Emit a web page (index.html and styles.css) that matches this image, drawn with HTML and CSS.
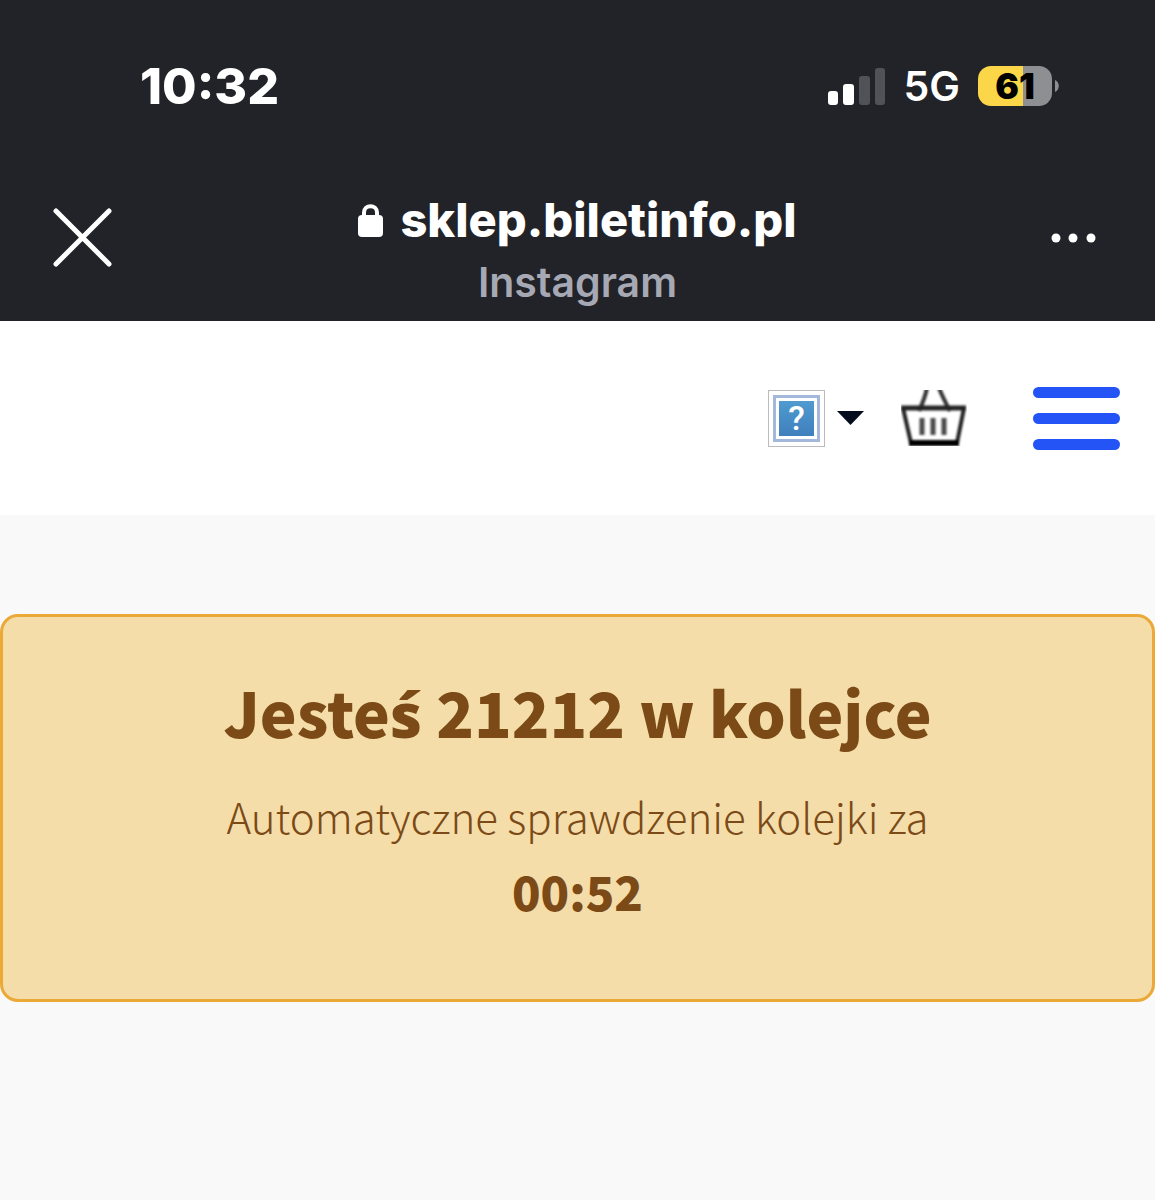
FILE: index.html
```html
<!DOCTYPE html>
<html lang="pl">
<head>
  <meta charset="UTF-8" />
  <meta name="viewport" content="width=device-width, initial-scale=1" />
  <title>sklep.biletinfo.pl</title>
  <link rel="stylesheet" href="styles.css">
</head>
<body>
  <div class="browser">
    <div class="status-bar">
      <span class="clock">10:32</span>
      <div class="status-icons">
        <svg class="signal" width="58" height="38" viewBox="0 0 58 38" aria-hidden="true">
          <rect x="0" y="24" width="10" height="14" rx="3" fill="#fff" />
          <rect x="15" y="17" width="11" height="21" rx="3" fill="#fff" />
          <rect x="31" y="9" width="11" height="29" rx="3" fill="#515257" />
          <rect x="47" y="1" width="10" height="37" rx="3" fill="#515257" />
        </svg>
        <span class="network">5G</span>
        <div class="battery-wrap">
          <span class="battery">61</span>
          <svg width="4" height="12" viewBox="0 0 4 12" aria-hidden="true">
            <path d="M0 0C5 2 5 10 0 12Z" fill="#8e8f93" />
          </svg>
        </div>
      </div>
    </div>

    <div class="address-bar">
      <button type="button" class="icon-btn" aria-label="Zamknij">
        <svg width="60" height="60" viewBox="0 0 60 60">
          <path d="M3 3L56 56M56 3L3 56" stroke="#fff" stroke-width="5" stroke-linecap="round" />
        </svg>
      </button>
      <div class="page-info">
        <div class="url">
          <svg width="25" height="33" viewBox="0 0 25 33" aria-hidden="true">
            <path d="M6 13V8.500C6 0 19 0 19 8.500V13" fill="none" stroke="#fff" stroke-width="4" />
            <rect x="0" y="11" width="25" height="22" rx="4" fill="#fff" />
          </svg>
          <span>sklep.biletinfo.pl</span>
        </div>
        <div class="source">Instagram</div>
      </div>
      <button type="button" class="icon-btn" aria-label="Więcej">
        <svg width="60" height="60" viewBox="0 0 60 60">
          <circle cx="14" cy="30" r="4.500" fill="#fff" />
          <circle cx="31" cy="30" r="4.500" fill="#fff" />
          <circle cx="49" cy="30" r="4.500" fill="#fff" />
        </svg>
      </button>
    </div>
  </div>

  <header class="site-header">
    <button type="button" class="icon-btn language" aria-label="Język">
      <span class="flag"><span class="flag-inner">?</span></span>
      <svg width="27" height="14" viewBox="0 0 27 14">
        <path d="M0 0H27L13.500 14Z" fill="#030d1d" />
      </svg>
    </button>
    <a href="#" class="basket" aria-label="Koszyk">
      <svg width="66" height="56" viewBox="0 0 66 56" fill="none">
        <g class="basket-lines">
          <path d="M26 -2Q24 8 18 21M38 -2Q42 8 49 21" stroke="#333" stroke-width="4" />
          <path d="M2 18L10 53H56L63 18" stroke="#222" stroke-width="4" />
          <path d="M0 18H65" stroke="#222" stroke-width="5" />
          <path d="M8 53H58" stroke="#000" stroke-width="6" />
          <path d="M21 28V45M32 28V45M43 28V45" stroke="#4a4a4a" stroke-width="5" />
        </g>
      </svg>
    </a>
    <button type="button" class="icon-btn menu" aria-label="Menu">
      <span></span>
      <span></span>
      <span></span>
    </button>
  </header>

  <main>
    <div class="queue">
      <h1>Jeste<span class="accented">ś</span> 21212 w kolejce</h1>
      <p>Automatyczne sprawdzenie kolejki za</p>
      <strong id="countdown">00:52</strong>
    </div>
  </main>
</body>
</html>
```

FILE: styles.css
```css
* {
  box-sizing: border-box;
}
body {
  margin: 0;
  font-family: 'Noto Sans CJK JP', sans-serif;
  background: #f9f9f9;
  color: #7b4a17;
}
svg {
  display: block;
}
.icon-btn {
  padding: 0;
  border: none;
  background: none;
  cursor: pointer;
}

/* browser bar */
.browser {
  background: #222328;
  color: #fff;
  font-family: Inter, sans-serif;
}
.status-bar {
  display: flex;
  align-items: center;
  justify-content: space-between;
  height: 172px;
  padding: 0 96px 0 140px;
}
.clock {
  font-size: 50px;
  font-weight: 800;
}
.status-icons {
  display: flex;
  align-items: center;
  gap: 18px;
}
.network {
  font-size: 41px;
  font-weight: 600;
}
.battery-wrap {
  display: flex;
  align-items: center;
  gap: 3px;
}
.battery {
  width: 74px;
  height: 40px;
  border-radius: 13px;
  background: linear-gradient(to right, #fbd648 61%, #8e8f93 61%);
  color: #000;
  font-size: 35px;
  font-weight: 900;
  line-height: 40px;
  text-align: center;
}
.address-bar {
  display: flex;
  align-items: flex-start;
  justify-content: space-between;
  padding: 18px 53px 9px;
}
.address-bar .icon-btn {
  margin-top: 18px;
}
.page-info {
  text-align: center;
}
.url {
  display: flex;
  align-items: center;
  gap: 17px;
  font-size: 47px;
  font-weight: 800;
  line-height: 60px;
}
.source {
  color: #a6a9b4;
  font-size: 41px;
  font-weight: 600;
  line-height: 60px;
  padding-top: 2px;
}

/* shop header */
.site-header {
  display: flex;
  align-items: center;
  justify-content: flex-end;
  height: 194px;
  padding: 0 35px;
  background: #fff;
}
.language {
  display: flex;
  align-items: center;
  gap: 12px;
}
.flag {
  padding: 4px;
  border: 1px solid #bbb;
}
.flag-inner {
  display: block;
  width: 47px;
  height: 47px;
  padding: 3px;
  border: 3px solid #a4b8dc;
  background: linear-gradient(#4f9bd0, #3f7fbd) content-box;
  color: #fff;
  font-family: Roboto, sans-serif;
  font-size: 34px;
  font-weight: 500;
  line-height: 35px;
}
.basket {
  margin: 0 66px 0 37px;
}
.basket-lines {
  filter: blur(1px);
}
.menu {
  display: flex;
  flex-direction: column;
  gap: 15px;
}
.menu span {
  width: 87px;
  height: 11px;
  border-radius: 6px;
  background: #2454f5;
}

/* queue notice */
.queue {
  margin-top: 99px;
  padding: 46px 24px 71px;
  border: 3px solid #eba937;
  border-radius: 18px;
  background: #f4dda9;
  text-align: center;
}
.queue h1 {
  margin: 0 0 16px;
  font-size: 62px;
  font-weight: 900;
  line-height: 96px;
}
.accented {
  font-family: 'Noto Sans', sans-serif;
}
.queue p {
  margin: 0;
  font-size: 42px;
  font-weight: 200;
  line-height: 75px;
}
.queue strong {
  display: block;
  font-size: 47px;
  font-weight: 900;
  line-height: 75px;
}
```
